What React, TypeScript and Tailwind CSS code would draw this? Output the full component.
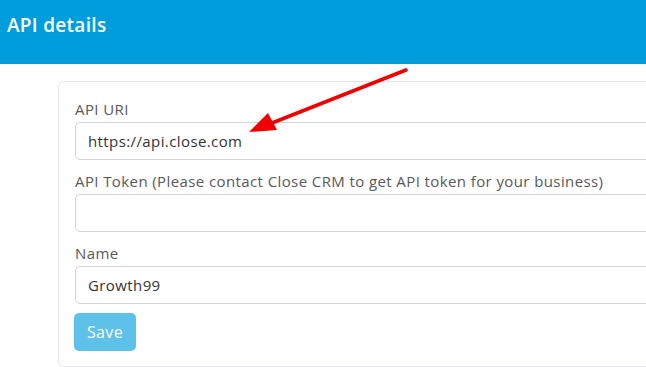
const fontStack = { fontFamily: '"Open Sans", "Lato", sans-serif' };

interface FieldProps {
  label: string;
  value?: string;
  first?: boolean;
}

function Field({ label, value = '', first }: FieldProps) {
  return (
    <div className={first ? '' : 'mt-[11px]'}>
      <label className="block text-[15px] leading-[20px] tracking-[0.4px] text-[#595959] mb-[3px]">{label}</label>
      <div className="h-[38px] w-full rounded-[5px] border border-[#ced4da] bg-white px-[12px] flex items-center text-[15px] tracking-[0.4px] text-[#333]">
        {value}
      </div>
    </div>
  );
}

export default function App() {
  return (
    <div className="relative w-[646px] h-[367px] overflow-hidden bg-white" style={fontStack}>
      <div className="h-[64px] bg-[#009ddc] pl-[7px] pt-[13px]">
        <h1 className="text-[19px] font-semibold tracking-[0.3px] text-white leading-[24px]">API details</h1>
      </div>

      <div className="ml-[58px] mt-[17px] w-[700px] rounded-[6px] border border-[#e4e6ea] bg-white pl-[16px] pr-[16px] pt-[17px] pb-[15px]">
        <Field first label="API URI" value="https://api.close.com" />
        <Field label="API Token (Please contact Close CRM to get API token for your business)" />
        <Field label="Name" value="Growth99" />
        <button className="mt-[9px] -ml-[1px] h-[38px] w-[62px] rounded-[5px] bg-[#5ec1ea] text-[16px] tracking-[0.4px] text-white">
          Save
        </button>
      </div>

      <svg className="absolute left-0 top-0 pointer-events-none" width="646" height="367">
        <line x1="406" y1="70" x2="272" y2="123" stroke="#f00000" strokeWidth="3.5" strokeLinecap="round" />
        <polygon points="249,132 268,113 277,130" fill="#f00000" />
      </svg>
    </div>
  );
}
